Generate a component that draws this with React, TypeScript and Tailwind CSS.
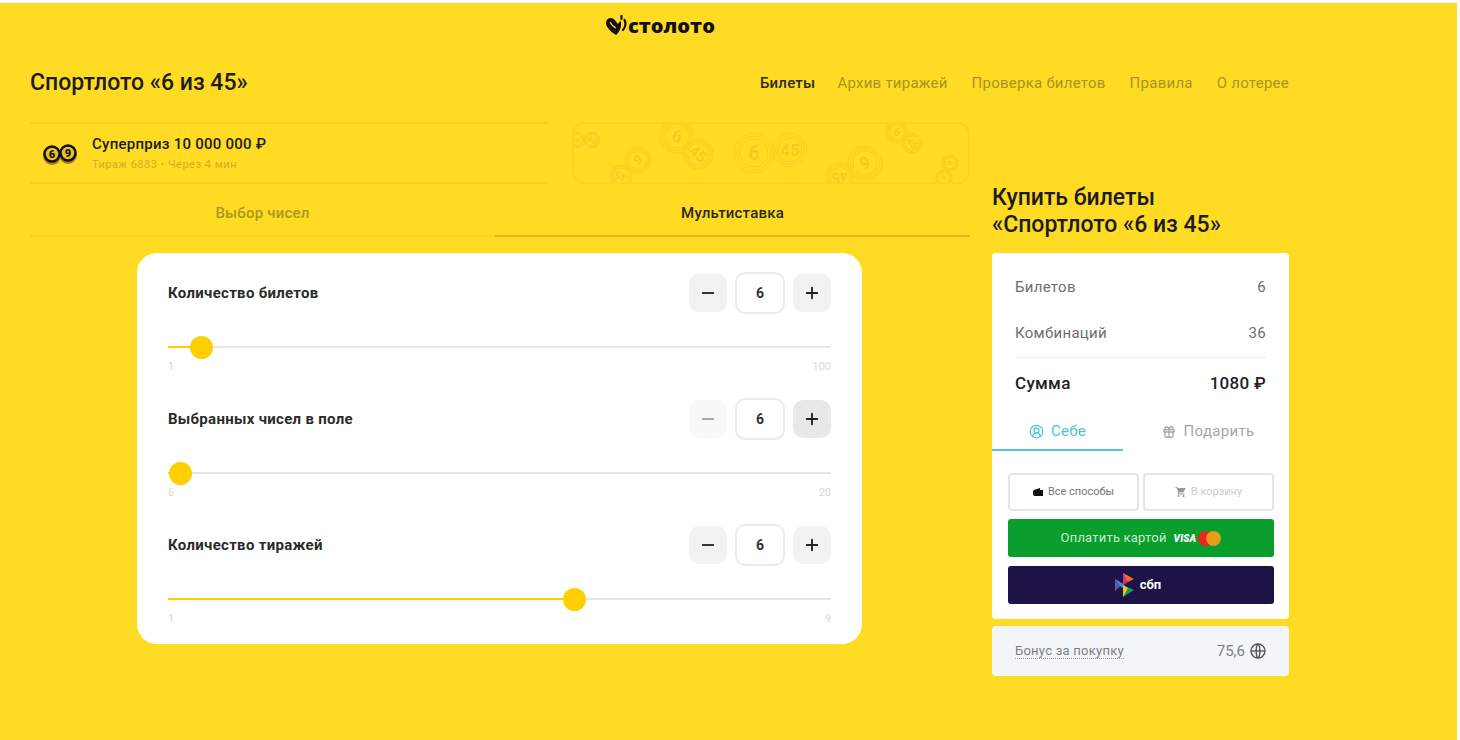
import { CircleUserRound, Gift, Minus, Plus } from "lucide-react";
import { MdShoppingCart } from "react-icons/md";

const navItems = ["Архив тиражей", "Проверка билетов", "Правила", "О лотерее"];

const balls = [
  { x: 5, y: 18, r: 8, n: "6", a: 0 },
  { x: 20, y: 18, r: 8, n: "45", a: 20 },
  { x: 105, y: 14, r: 17, n: "6", a: 15 },
  { x: 126, y: 32, r: 15, n: "45", a: 40 },
  { x: 66, y: 38, r: 13, n: "9", a: -30 },
  { x: 49, y: 54, r: 11, n: "45", a: 200 },
  { x: 182, y: 31, r: 20, n: "6", a: 0 },
  { x: 218, y: 28, r: 17, n: "45", a: 0 },
  { x: 293, y: 41, r: 17, n: "9", a: -20 },
  { x: 268, y: 55, r: 14, n: "45", a: 170 },
  { x: 325, y: 10, r: 11, n: "6", a: 10 },
  { x: 340, y: 21, r: 10, n: "45", a: 45 },
  { x: 378, y: 41, r: 8, n: "6", a: 80 },
  { x: 372, y: 56, r: 8, n: "9", a: -60 },
];

const sliders = [
  { label: "Количество билетов", min: "1", max: "100", pos: 33, minusClass: "bg-[#f2f2f2] text-[#333333]", plusClass: "bg-[#f2f2f2]" },
  { label: "Выбранных чисел в поле", min: "6", max: "20", pos: 12, minusClass: "bg-[#f8f8f8] text-[#a8a8a8]", plusClass: "bg-[#e8e8e8]" },
  { label: "Количество тиражей", min: "1", max: "9", pos: 406, minusClass: "bg-[#f2f2f2] text-[#333333]", plusClass: "bg-[#f2f2f2]" },
];

function Logo() {
  return (
    <div className="flex items-center h-[46px] pl-[576px]">
      <svg width="22" height="22" viewBox="0 0 22 22" className="shrink-0">
        <path d="M10 20C5 17 0 12 0 8c0-3 2-5 4.500-5 2 0 4 1 5 3l2.500 3c1-1.500 2-3 2.500-3.500 1.500 4 0 11-4.500 14.500z" fill="#111111" />
        <path d="M4 7c1.500 3 3.500 5 6 6" stroke="#ffdb24" strokeWidth="1.200" fill="none" />
        <path d="M15.500 1v3M18.500 5c1.500 3 1 7-1.500 10" stroke="#111111" strokeWidth="2.200" fill="none" strokeLinecap="round" />
      </svg>
      <span className="font-['Open_Sans',sans-serif] font-extrabold text-[20px] leading-none text-[#111111]">столото</span>
    </div>
  );
}

function Coins() {
  return (
    <svg width="36" height="26" viewBox="0 0 36 26" className="shrink-0">
      <circle cx="10" cy="16" r="9" fill="#a8801a" />
      <circle cx="26" cy="15" r="9" fill="#a8801a" />
      <circle cx="10" cy="14" r="7.500" fill="#e9c225" stroke="#111111" strokeWidth="2.500" />
      <circle cx="26" cy="13" r="7.500" fill="#e9c225" stroke="#111111" strokeWidth="2.500" />
      <text x="10" y="18" textAnchor="middle" fontSize="11" fontWeight="900" fill="#111111" fontFamily="Roboto, sans-serif">6</text>
      <text x="26" y="17" textAnchor="middle" fontSize="11" fontWeight="900" fill="#111111" fontFamily="Roboto, sans-serif">9</text>
    </svg>
  );
}

function BallsBanner() {
  return (
    <div className="w-[398px] h-[62px] ml-[24px] border-2 border-[#f8d423] rounded-[12px] overflow-hidden">
      <svg width="394" height="58" viewBox="2 2 394 58">
        {balls.map((b, i) => (
          <g key={i} transform={`rotate(${b.a} ${b.x} ${b.y})`} fill="none" stroke="#f5d022" strokeWidth="1">
            <circle cx={b.x} cy={b.y} r={b.r} />
            <circle cx={b.x} cy={b.y} r={b.r * 0.85} />
            <circle cx={b.x} cy={b.y} r={b.r * 0.7} />
            <text
              x={b.x}
              y={b.y + b.r * 0.35}
              textAnchor="middle"
              fontSize={b.r}
              fontWeight="500"
              fill="#f0cb20"
              stroke="none"
              fontFamily="Roboto, sans-serif"
            >
              {b.n}
            </text>
          </g>
        ))}
      </svg>
    </div>
  );
}

function SliderRow({ label, min, max, pos, minusClass, plusClass }: (typeof sliders)[number]) {
  return (
    <div className="mb-[25.5px] last:mb-0">
      <div className="flex items-center justify-between h-[42px]">
        <span className="text-[15px] tracking-[0.3px] font-bold text-[#2b2b2b]">{label}</span>
        <div className="flex items-center gap-2">
          <button className={`flex items-center justify-center w-[38px] h-[38px] rounded-[10px] ${minusClass}`}>
            <Minus size={18} strokeWidth={2.5} />
          </button>
          <div className="flex items-center justify-center w-[50px] h-[42px] rounded-[10px] border-2 border-[#ebebeb] text-[14px] font-bold text-[#333333]">
            6
          </div>
          <button className={`flex items-center justify-center w-[38px] h-[38px] rounded-[10px] text-[#222222] ${plusClass}`}>
            <Plus size={18} strokeWidth={2.5} />
          </button>
        </div>
      </div>
      <div className="relative h-[2px] mt-[32px] bg-[#e6e6e6]">
        <div className="h-full bg-[#ffcf00]" style={{ width: pos }} />
        <div
          className="absolute top-1/2 w-[23px] h-[23px] -ml-[11.5px] -mt-[11.5px] rounded-full bg-[#ffcf00]"
          style={{ left: pos }}
        />
      </div>
      <div className="flex justify-between mt-[12.5px] h-[12px] text-[11px] leading-[12px] text-[#d8d8d8]">
        <span>{min}</span>
        <span>{max}</span>
      </div>
    </div>
  );
}

function SummaryRow({ label, value }: { label: string; value: string }) {
  return (
    <div className="flex justify-between h-[24px] leading-[24px] text-[15px] tracking-[0.3px] text-[#6e6e6e]">
      <span>{label}</span>
      <span>{value}</span>
    </div>
  );
}

function BonusIcon() {
  return (
    <svg width="16" height="16" viewBox="0 0 16 16" fill="none" stroke="#555555" strokeWidth="1.400">
      <circle cx="8" cy="8" r="7" />
      <path d="M1 8h14" />
      <path d="M8 1c-2.500 2-2.500 12 0 14M8 1c2.500 2 2.500 12 0 14" />
    </svg>
  );
}

function SbpLogo() {
  return (
    <svg width="22" height="24" viewBox="0 0 22 24" className="shrink-0">
      <path d="M0 6l7 6-7 6z" fill="#5b57a2" />
      <path d="M0 6l10 6-3 3z" fill="#3f8fd0" />
      <path d="M8 0l11 6-6 3-5-2z" fill="#ef6b25" />
      <path d="M8 0v12l5-3z" fill="#d9307e" />
      <path d="M8 12l11 5-11 7z" fill="#1d9d4f" />
      <path d="M8 12v12l5-9z" fill="#f3c21c" />
    </svg>
  );
}

export default function App() {
  return (
    <div className="w-[1460px] h-[740px] overflow-hidden bg-white pt-[3px] pr-[3px] font-['Roboto',sans-serif]">
      <div className="h-full bg-[#ffdb24] pl-[30px]">
        <div className="w-[1259px]">
          <Logo />

          <div className="flex items-center justify-between h-[68px] mb-[5px]">
            <h1 className="pt-[1px] text-[23px] font-medium text-[#1c1c1c]">Спортлото «6 из 45»</h1>
            <nav className="flex gap-6 text-[15px] tracking-[0.25px] text-[#a8931f]">
              <span className="-mr-[2px] font-medium text-[#2a2a1a]">Билеты</span>
              {navItems.map((item) => (
                <span key={item}>{item}</span>
              ))}
            </nav>
          </div>

          <div className="flex gap-[22px]">
            <div className="w-[940px]">
              <div className="flex">
                <div className="flex items-center gap-[14px] w-[518px] h-[62px] pl-[12px] border-y-2 border-[#f7d122]">
                  <Coins />
                  <div>
                    <div className="text-[15px] leading-[20px] tracking-[0.25px] font-medium text-[#1c1c1c]">Суперприз 10 000 000 ₽</div>
                    <div className="text-[11px] leading-[16px] mt-[3px] tracking-[0.5px] text-[#d1b01f]">Тираж 6883 • Через 4 мин</div>
                  </div>
                </div>
                <BallsBanner />
              </div>

              <div className="flex h-[53px] text-[15px] tracking-[0.2px] font-medium">
                <div className="flex w-[465px] items-center justify-center pt-[8px] border-b-2 border-[#f7d122] text-[#ab971f]">Выбор чисел</div>
                <div className="flex flex-1 items-center justify-center pt-[8px] border-b-2 border-[#d8b91f] text-[#2a2a1a]">Мультиставка</div>
              </div>

              <div className="w-[725px] ml-[107px] mt-[16px] px-[31px] pt-[19px] pb-[19px] bg-white rounded-[20px]">
                {sliders.map((s) => (
                  <SliderRow key={s.label} {...s} />
                ))}
              </div>
            </div>

            <aside className="w-[297px] pt-[62px]">
              <h2 className="text-[23px] leading-[27px] font-medium text-[#1c1c1c]">
                Купить билеты
                <br />
                «Спортлото «6 из 45»
              </h2>

              <div className="mt-[15px] pt-[22px] pb-[15px] bg-white rounded-[4px]">
                <div className="px-[23px]">
                  <SummaryRow label="Билетов" value="6" />
                  <div className="mt-[22px]">
                    <SummaryRow label="Комбинаций" value="36" />
                  </div>
                  <div className="h-px mt-[12px] bg-[#eeeeee]" />
                  <div className="flex justify-between h-[26px] mt-[12px] leading-[26px] text-[17px] font-medium tracking-[0.3px] text-[#222222]">
                    <span>Сумма</span>
                    <span>1080 ₽</span>
                  </div>
                </div>

                <div className="flex h-[39px] mt-[16px] text-[15px] tracking-[0.3px]">
                  <div className="flex items-center justify-center gap-[7px] w-[131px] pt-[1px] border-b-2 border-[#4fc3dc] text-[#4fc3dc]">
                    <CircleUserRound size={15} />
                    Себе
                  </div>
                  <div className="flex flex-1 items-center justify-center gap-[8px] pl-[4px] text-[#a6a6a6]">
                    <Gift size={14} strokeWidth={2.2} />
                    Подарить
                  </div>
                </div>

                <div className="pl-[16px] pr-[15px] mt-[22px]">
                  <div className="grid grid-cols-2 gap-[4px]">
                    <div className="flex items-center justify-center gap-[5px] h-[38px] rounded-[4px] border-2 border-[#e6e6e6] text-[11px] text-[#777777]">
                      <svg width="10" height="8" viewBox="0 0 10 8">
                        <path d="M1 2l6-2v2h3v6H2a2 2 0 0 1-2-2V3z" fill="#111111" />
                      </svg>
                      Все способы
                    </div>
                    <div className="flex items-center justify-center gap-[4px] h-[38px] rounded-[4px] border-2 border-[#e6e6e6] text-[11px] text-[#cccccc]">
                      <MdShoppingCart size={12} className="text-[#999999]" />
                      В корзину
                    </div>
                  </div>

                  <div className="flex items-center justify-center h-[38px] mt-[8px] rounded-[3px] bg-[#0a9e2c] text-[13px] tracking-[0.2px] text-[#c9edd0]">
                    Оплатить картой
                    <span className="ml-[7px] text-[10px] italic font-black text-white">VISA</span>
                    <span className="flex ml-[2px]">
                      <span className="w-[15px] h-[15px] rounded-full bg-[#e6291c]" />
                      <span className="w-[15px] h-[15px] -ml-[7px] rounded-full bg-[#f79e1b]/90" />
                    </span>
                  </div>

                  <div className="flex items-center justify-center gap-[3px] h-[38px] mt-[9px] pr-[6px] rounded-[3px] bg-[#1d1346] text-[13px] font-bold text-white">
                    <SbpLogo />
                    сбп
                  </div>
                </div>
              </div>

              <div className="flex items-center justify-between h-[50px] mt-[7px] px-[23px] rounded-[4px] bg-[#f3f6f8] text-[#7a7f82]">
                <span className="text-[13px] tracking-[0.25px] border-b border-dotted border-[#9aa0a3] leading-[15px]">Бонус за покупку</span>
                <span className="flex items-center gap-[5px] text-[15px]">
                  75,6
                  <BonusIcon />
                </span>
              </div>
            </aside>
          </div>
        </div>
      </div>
    </div>
  );
}
